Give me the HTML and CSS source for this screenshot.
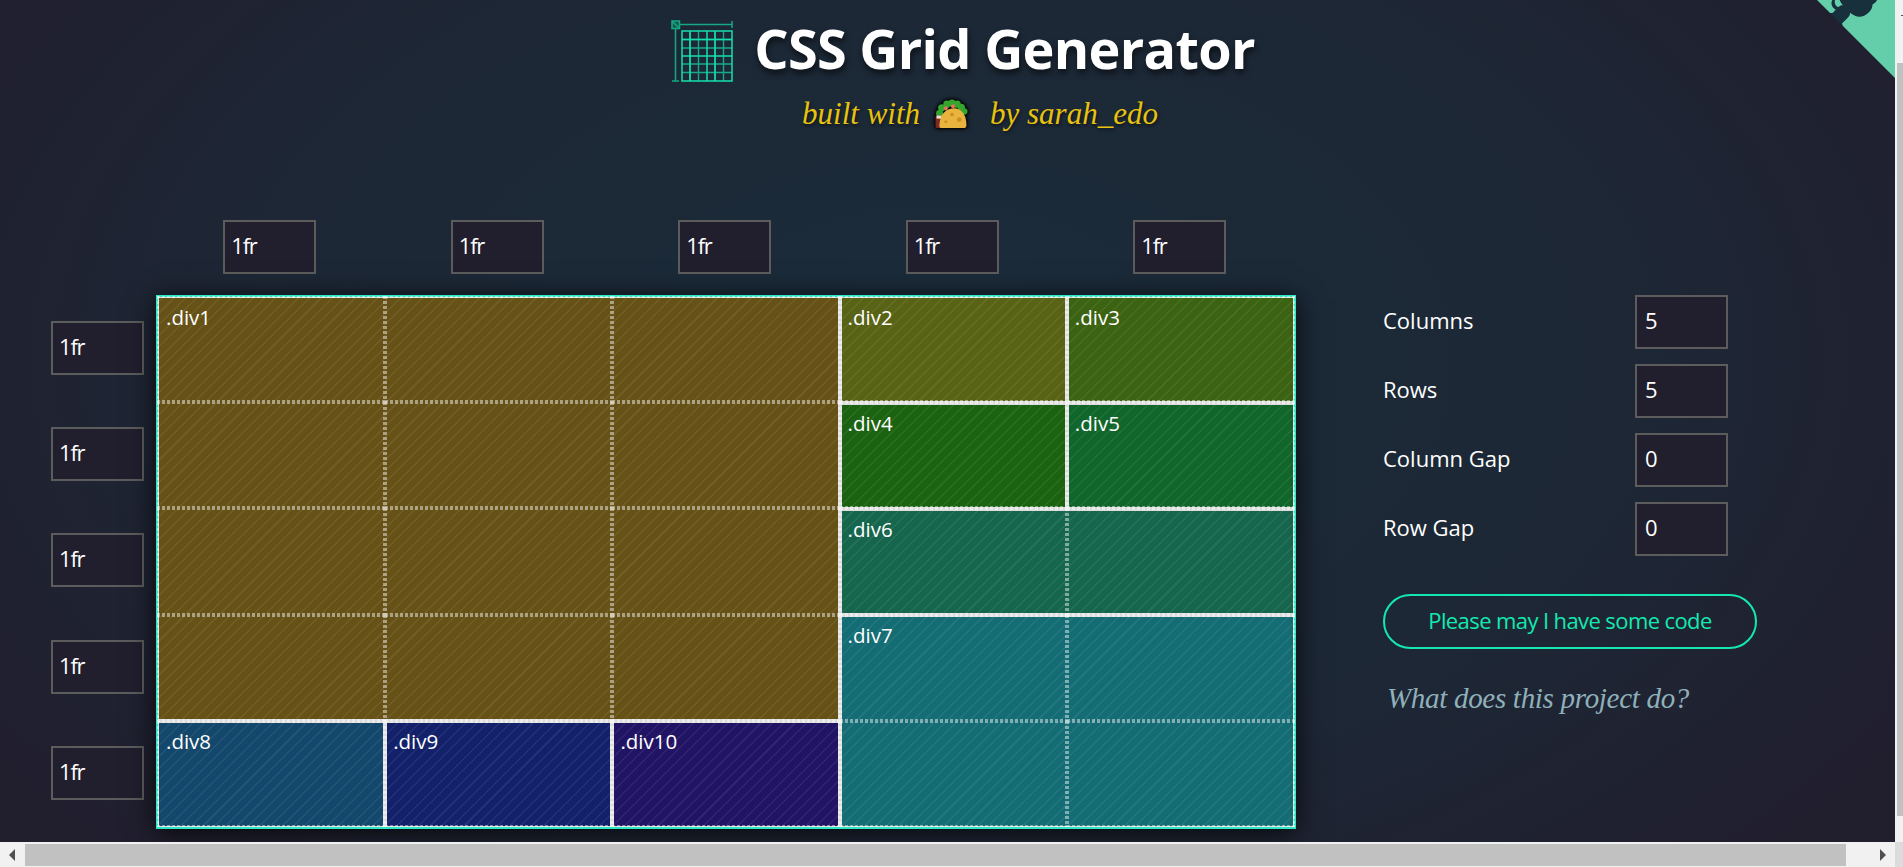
FILE: index.html
```html
<!DOCTYPE html>
<html lang="en">
<head>
<meta charset="utf-8">
<title>CSS Grid Generator</title>
<link rel="stylesheet" href="styles.css">
</head>
<body>
<div class="window">
  <div class="viewport">
    <main class="page">
      <svg class="corner" viewBox="0 0 78 78" aria-hidden="true">
        <g transform="translate(-41 -41) scale(.47)">
          <path class="corner-bg" d="M0,0 L115,115 L130,115 L142,142 L400,400 L400,0 Z"/>
          <path class="corner-cat" d="M128.3,109.0 C113.8,99.7 119.0,89.6 119.0,89.6 C122.0,82.7 120.5,78.6 120.5,78.6 C119.2,72.0 123.4,76.3 123.4,76.3 C127.3,80.9 125.5,87.3 125.5,87.3 C122.9,97.6 130.6,101.9 134.4,103.2"/>
          <path class="corner-cat" d="M115.0,115.0 C114.9,115.1 118.7,116.5 119.8,115.4 L133.7,101.6 C136.9,99.2 139.9,98.4 142.2,98.6 C133.8,88.0 127.5,74.4 143.8,58.0 C148.5,53.4 154.0,51.2 159.7,51.0 C160.3,49.4 163.2,43.6 171.4,40.1 C171.4,40.1 176.1,42.5 178.8,56.2 C183.1,58.6 187.2,61.8 190.9,65.4 C194.5,69.0 197.7,73.2 200.1,77.6 C213.8,80.2 216.3,84.9 216.3,84.9 C212.7,93.1 206.9,96.0 205.4,96.6 C205.1,102.4 203.0,107.8 198.3,112.5 C181.9,128.9 168.3,122.5 157.7,114.1 C157.9,116.9 156.7,120.9 152.7,124.9 L141.0,136.5 C139.8,137.7 141.6,141.9 141.8,141.8 Z"/>
        </g>
      </svg>

      <header class="header">
        <div class="title-row">
          <svg class="logo" viewBox="0 0 62 62" aria-hidden="true">
            <g class="logo-guide">
              <rect x="1" y="1" width="7.5" height="7.5"/>
              <path d="M1 1 L8.5 8.5 M8.5 4.5 H61 M61 1 V8 M4.5 8.5 V61 M1 61 H8"/>
            </g>
            <g class="logo-dim">
              <path d="M19 11 V61 M27.500 11 V61 M44 11 V61 M52.500 11 V61 M11 19.500 H61 M11 28 H61 M11 44 H61 M11 52.500 H61"/>
            </g>
            <g class="logo-bright">
              <rect x="11" y="11" width="50" height="50"/>
              <path d="M36 11 V61 M11 36 H61 M19 11 V61 M44 11 V61 M11 19.500 H61"/>
            </g>
          </svg>
          <h1 class="title">CSS Grid Generator</h1>
        </div>
        <p class="byline">
          <span>built with</span>
          <svg class="taco" viewBox="0 0 34 32" aria-hidden="true">
            <g fill="#35a52e">
              <circle cx="6" cy="15" r="3.500"/><circle cx="8" cy="9.500" r="3.500"/><circle cx="13" cy="6" r="3.500"/>
              <circle cx="18" cy="5" r="3.500"/><circle cx="23" cy="6" r="3.500"/><circle cx="27" cy="9" r="3.500"/>
              <circle cx="30" cy="13" r="3"/>
            </g>
            <circle cx="12" cy="10" r="2" fill="#e2725b"/>
            <circle cx="19" cy="8" r="2" fill="#e2725b"/>
            <path d="M3 17 H8 V29 H3 Q2 29 2 27 V18 Z" fill="#7a2a22"/>
            <path d="M3 17 H8 V20 H3 Z" fill="#e8e4d4"/>
            <path d="M7 29 Q5 29 6 24 C7 15 13 10 20 10 C27 10 32 16 32 26 Q32 29 30 29 Z" fill="#e9b43e"/>
            <circle cx="18" cy="16" r="1.800" fill="#cf8f1f"/>
            <circle cx="25" cy="21" r="2.300" fill="#cf8f1f"/>
            <circle cx="12" cy="23" r="1.500" fill="#cf8f1f"/>
          </svg>
          <span>by sarah_edo</span>
        </p>
      </header>

      <section class="board">
        <div class="col-inputs">
          <div class="field">1fr</div><div class="field">1fr</div><div class="field">1fr</div><div class="field">1fr</div><div class="field">1fr</div>
        </div>

        <div class="row-inputs">
          <div class="field">1fr</div><div class="field">1fr</div><div class="field">1fr</div><div class="field">1fr</div><div class="field">1fr</div>
        </div>

        <div class="grid">
          <div class="item d1">.div1</div>
          <div class="item d2">.div2</div>
          <div class="item d3">.div3</div>
          <div class="item d4">.div4</div>
          <div class="item d5">.div5</div>
          <div class="item d6">.div6</div>
          <div class="item d7">.div7</div>
          <div class="item d8">.div8</div>
          <div class="item d9">.div9</div>
          <div class="item d10">.div10</div>
          <div class="cells">
            <i></i><i></i><i></i><i></i><i></i>
            <i></i><i></i><i></i><i></i><i></i>
            <i></i><i></i><i></i><i></i><i></i>
            <i></i><i></i><i></i><i></i><i></i>
            <i></i><i></i><i></i><i></i><i></i>
          </div>
        </div>

        <aside class="panel">
          <div class="setting"><span class="label">Columns</span><div class="field">5</div></div>
          <div class="setting"><span class="label">Rows</span><div class="field">5</div></div>
          <div class="setting"><span class="label">Column Gap</span><div class="field">0</div></div>
          <div class="setting"><span class="label">Row Gap</span><div class="field">0</div></div>
          <button class="code-btn" type="button">Please may I have some code</button>
          <p class="about">What does this project do?</p>
        </aside>
      </section>
    </main>
    <div class="vscroll"><span class="vtick"></span><div class="vthumb"></div></div>
  </div>
  <div class="hscroll">
    <span class="arrow arrow-left"></span>
    <div class="hthumb"></div>
    <span class="arrow arrow-right"></span>
    <div class="scroll-end"></div>
  </div>
</div>
</body>
</html>
```

FILE: styles.css
```css
* { box-sizing: border-box; }
html, body { margin: 0; height: 100%; overflow: hidden; }
body { font-family: "Open Sans", "Noto Sans", sans-serif; color: #fff; }

.window { display: flex; flex-direction: column; height: 867px; width: 1903px; }
.viewport { display: flex; height: 842px; }

.page {
  position: relative;
  flex: 1;
  overflow: hidden;
  padding: 0 0 0 51px;
  background: radial-gradient(ellipse 1150px 720px at 940px 360px, #1a2c3a 0%, #1d2735 60%, #211e2e 100%);
}

.corner { position: absolute; top: 0; right: 0; width: 78px; height: 78px; }
.corner-bg { fill: #64ceaa; }
.corner-cat { fill: #18303c; }

.header { width: 1824px; height: 220px; display: flex; flex-direction: column; align-items: center; padding-top: 12px; }
.title-row { display: flex; align-items: center; gap: 21px; }
.logo { width: 62px; height: 62px; fill: none; margin-top: 6px; }
.logo-guide { stroke: #14a884; stroke-width: 1.5; }
.logo-guide rect { fill: #14584e; }
.logo-dim { stroke: #1aa88a; stroke-width: 1.400; }
.logo-bright { stroke: #16e0aa; stroke-width: 1.500; }
.title {
  margin: 0;
  font-size: 54px;
  line-height: 72px;
  font-weight: 700;
  letter-spacing: -0.7px;
  text-shadow: 1px 4px 6px rgba(0,0,0,.6);
}
.byline {
  margin: 10px 0 0 34px;
  display: flex;
  align-items: center;
  font-family: "Liberation Serif", serif;
  font-style: italic;
  font-size: 31px;
  line-height: 40px;
  color: #e8c20e;
  text-shadow: 1px 2px 3px rgba(0,0,0,.5);
}
.taco { width: 40px; height: 33px; margin: 0 19px 0 11px; filter: drop-shadow(0 0 2px #000) drop-shadow(0 0 1px #000); }

.board {
  display: grid;
  grid-template-columns: 93px 1140px auto;
  grid-template-rows: 53px 534px;
  column-gap: 12px;
  row-gap: 22px;
}
.field {
  width: 93px;
  height: 54px;
  padding: 0 8px 4px;
  display: flex;
  align-items: center;
  background: #211e2e;
  border: 2px solid #5c5c5c;
  font-size: 22px;
  letter-spacing: -1.2px;
  color: #fff;
}
.col-inputs {
  grid-column: 2;
  grid-row: 1;
  display: grid;
  grid-template-columns: repeat(5, 227.5px);
  justify-items: center;
}
.row-inputs {
  grid-column: 1;
  grid-row: 2;
  display: grid;
  grid-template-rows: repeat(5, 106.2px);
  align-items: center;
}
.col-inputs .field, .row-inputs .field { padding-left: 6px; }
.grid {
  grid-column: 2;
  grid-row: 2;
  position: relative;
  display: grid;
  grid-template-columns: repeat(5, 1fr);
  grid-template-rows: repeat(5, 1fr);
  border: 2px solid #2ce8c4;
  box-shadow: 0 4px 26px rgba(0,0,0,.8);
}
.item {
  --hatch: rgba(255,255,255,.065);
  padding: 3px 6px;
  font-size: 20.5px;
  line-height: 30px;
  border: 2px solid #dcdcdc;
  background-image: repeating-linear-gradient(-45deg, transparent 0, transparent 6.5px, var(--hatch) 6.5px, var(--hatch) 8px);
}
.d1 { grid-column: 1 / 4; grid-row: 1 / 5; background-color: #665217; }
.d2 { grid-column: 4; grid-row: 1; background-color: #596315; }
.d3 { grid-column: 5; grid-row: 1; background-color: #3b6312; }
.d4 { grid-column: 4; grid-row: 2; background-color: #1c6311; }
.d5 { grid-column: 5; grid-row: 2; background-color: #11662c; }
.d6 { grid-column: 4 / 6; grid-row: 3; background-color: #15664d; }
.d7 { grid-column: 4 / 6; grid-row: 4 / 6; background-color: #146c74; }
.d8 { grid-column: 1; grid-row: 5; background-color: #13476b; }
.d9 { grid-column: 2; grid-row: 5; background-color: #12216a; }
.d10 { grid-column: 3; grid-row: 5; background-color: #221465; }
.d1, .d8 { border-left-width: 1px; padding-left: 7px; }
.d1, .d2, .d3 { border-top-width: 1px; padding-top: 4px; }
.d3, .d5, .d6, .d7 { border-right-width: 1px; }
.d7, .d8, .d9, .d10 { border-bottom-width: 1px; }

.cells {
  position: absolute;
  inset: -1px -1px 0 -1px;
  display: grid;
  grid-template-columns: repeat(5, 1fr);
  grid-template-rows: repeat(5, 1fr);
  pointer-events: none;
}
.cells i {
  --dash: rgba(255,255,255,.45);
  background:
    repeating-linear-gradient(to bottom, var(--dash) 0, var(--dash) 3px, transparent 3px, transparent 5px) left top / 2px 100% no-repeat,
    repeating-linear-gradient(to bottom, var(--dash) 0, var(--dash) 3px, transparent 3px, transparent 5px) right top / 2px 100% no-repeat,
    repeating-linear-gradient(to right, var(--dash) 0, var(--dash) 3px, transparent 3px, transparent 5px) left top / 100% 2px no-repeat,
    repeating-linear-gradient(to right, var(--dash) 0, var(--dash) 3px, transparent 3px, transparent 5px) left bottom / 100% 2px no-repeat;
}

.panel { grid-column: 3; grid-row: 2; margin-left: 75px; display: flex; flex-direction: column; }
.setting { display: flex; align-items: center; justify-content: space-between; width: 345px; margin-bottom: 15px; font-size: 22px; }
.label { padding-bottom: 4px; }
.code-btn {
  width: 374px;
  height: 55px;
  margin-top: 23px;
  padding-bottom: 4px;
  border: 2.500px solid #14e8b0;
  border-radius: 28px;
  background: transparent;
  color: #14e8b0;
  font: inherit;
  font-size: 22px;
  letter-spacing: -0.6px;
}
.about {
  margin: 29px 0 0 4px;
  font-family: "Liberation Serif", serif;
  font-style: italic;
  font-size: 29px;
  line-height: 40px;
  letter-spacing: -0.3px;
  color: #8fb0ba;
}

.vscroll { position: relative; width: 8px; background: #f1f1f1; padding: 63px 0 26px 2px; }
.vtick { position: absolute; top: 15px; right: 0; width: 2px; height: 1px; background: #505050; }
.vthumb { height: 100%; background: #c1c1c1; }

.hscroll { position: relative; display: flex; align-items: center; height: 25px; padding: 2px 0 1px 25px; background: #f1f1f1; }
.hthumb { width: 1821px; height: 100%; background: #c1c1c1; }
.arrow { position: absolute; top: 7px; width: 0; height: 0; border-top: 6px solid transparent; border-bottom: 6px solid transparent; }
.arrow-left { left: 9px; border-right: 6px solid #505050; }
.arrow-right { left: 1880px; border-left: 6px solid #505050; }
.scroll-end { position: absolute; top: 0; bottom: 0; right: 0; width: 8px; background: #dcdcdc; }
```
